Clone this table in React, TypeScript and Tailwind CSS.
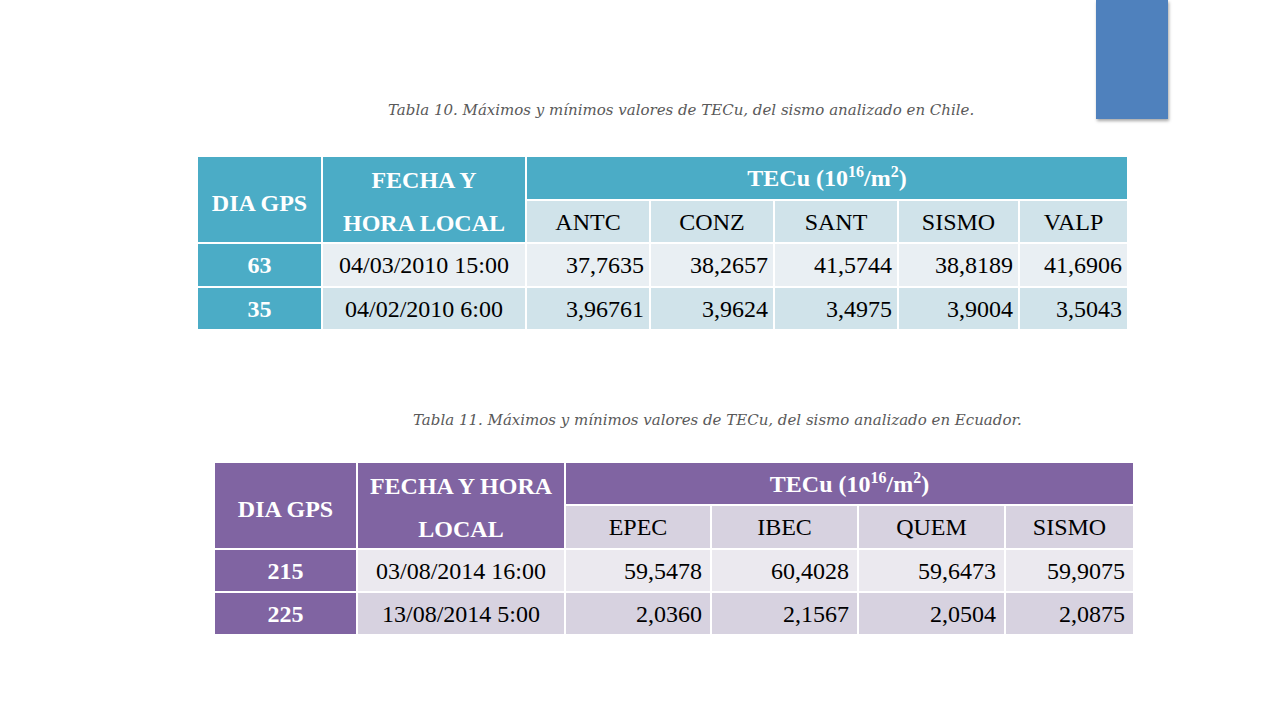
const CHILE = {
  stations: ['ANTC', 'CONZ', 'SANT', 'SISMO', 'VALP'],
  rows: [
    { dia: '63', fecha: '04/03/2010 15:00', values: ['37,7635', '38,2657', '41,5744', '38,8189', '41,6906'] },
    { dia: '35', fecha: '04/02/2010 6:00', values: ['3,96761', '3,9624', '3,4975', '3,9004', '3,5043'] },
  ],
}

const ECUADOR = {
  stations: ['EPEC', 'IBEC', 'QUEM', 'SISMO'],
  rows: [
    { dia: '215', fecha: '03/08/2014 16:00', values: ['59,5478', '60,4028', '59,6473', '59,9075'] },
    { dia: '225', fecha: '13/08/2014 5:00', values: ['2,0360', '2,1567', '2,0504', '2,0875'] },
  ],
}

function TecuLabel() {
  return (
    <span>
      TECu (10<sup className="text-[16px] relative -top-[9px]">16</sup>/m<sup className="text-[16px] relative -top-[9px]">2</sup>)
    </span>
  )
}

function Caption({ children, className }: { children: string; className: string }) {
  return (
    <p
      className={`italic text-[15px] leading-[20px] text-[#595959] whitespace-nowrap ${className}`}
      style={{ fontFamily: '"DejaVu Serif", "Liberation Serif", serif' }}
    >
      {children}
    </p>
  )
}

export default function App() {
  return (
    <div
      className="w-[1280px] h-[720px] bg-white overflow-hidden text-[24px] text-black"
      style={{ fontFamily: '"Liberation Serif", "Times New Roman", serif' }}
    >
      {/* fila superior: título tabla 10 + rectángulo de acento */}
      <div className="flex items-start h-[120px]">
        <div className="w-[1096px] pt-[100px]">
          <Caption className="ml-[388px]">
            Tabla 10. Máximos y mínimos valores de TECu, del sismo analizado en Chile.
          </Caption>
        </div>
        <div className="w-[72px] h-[119px] bg-[#4f81bd] shadow-[1px_2px_3px_rgba(0,0,0,0.35)]" />
      </div>

      {/* tabla Chile */}
      <div className="ml-[198px] mt-[37px] w-[929px] grid grid-cols-[123px_202px_122px_122px_122px_119px_107px] grid-rows-[42px_41px_42px_41px] gap-[2px]">
        <div className="row-span-2 bg-[#4bacc6] text-white font-bold flex items-center justify-center pt-[6px]">
          DIA GPS
        </div>
        <div className="row-span-2 bg-[#4bacc6] text-white font-bold flex flex-col items-center justify-center leading-[43px] pt-[4px]">
          <span>FECHA Y</span>
          <span>HORA LOCAL</span>
        </div>
        <div className="col-span-5 bg-[#4bacc6] text-white font-bold flex items-center justify-center">
          <TecuLabel />
        </div>
        {CHILE.stations.map((s) => (
          <div key={s} className="bg-[#d0e3ea] flex items-center justify-center">
            {s}
          </div>
        ))}
        {CHILE.rows.map((r, i) => {
          const bg = i === 0 ? 'bg-[#e9eff3]' : 'bg-[#d0e3ea]'
          return [
            <div key={r.dia} className="bg-[#4bacc6] text-white font-bold flex items-center justify-center">
              {r.dia}
            </div>,
            <div key={r.fecha} className={`${bg} flex items-center justify-center`}>
              {r.fecha}
            </div>,
            ...r.values.map((v, j) => (
              <div key={r.dia + j} className={`${bg} flex items-center justify-end pr-[5px]`}>
                {v}
              </div>
            )),
          ]
        })}
      </div>

      <Caption className="ml-[413px] mt-[81px]">
        Tabla 11. Máximos y mínimos valores de TECu, del sismo analizado en Ecuador.
      </Caption>

      {/* tabla Ecuador */}
      <div className="ml-[215px] mt-[33px] w-[918px] grid grid-cols-[141px_206px_144px_145px_145px_127px] grid-rows-[41px_42px_41px_41px] gap-[2px]">
        <div className="row-span-2 bg-[#8064a2] text-white font-bold flex items-center justify-center pt-[6px]">
          DIA GPS
        </div>
        <div className="row-span-2 bg-[#8064a2] text-white font-bold flex flex-col items-center justify-center leading-[43px] pt-[4px]">
          <span>FECHA Y HORA</span>
          <span>LOCAL</span>
        </div>
        <div className="col-span-4 bg-[#8064a2] text-white font-bold flex items-center justify-center">
          <TecuLabel />
        </div>
        {ECUADOR.stations.map((s) => (
          <div key={s} className="bg-[#d7d2e0] flex items-center justify-center">
            {s}
          </div>
        ))}
        {ECUADOR.rows.map((r, i) => {
          const bg = i === 0 ? 'bg-[#ebe9ef]' : 'bg-[#d7d2e0]'
          return [
            <div key={r.dia} className="bg-[#8064a2] text-white font-bold flex items-center justify-center">
              {r.dia}
            </div>,
            <div key={r.fecha} className={`${bg} flex items-center justify-center`}>
              {r.fecha}
            </div>,
            ...r.values.map((v, j) => (
              <div key={r.dia + j} className={`${bg} flex items-center justify-end pr-[8px]`}>
                {v}
              </div>
            )),
          ]
        })}
      </div>
    </div>
  )
}
